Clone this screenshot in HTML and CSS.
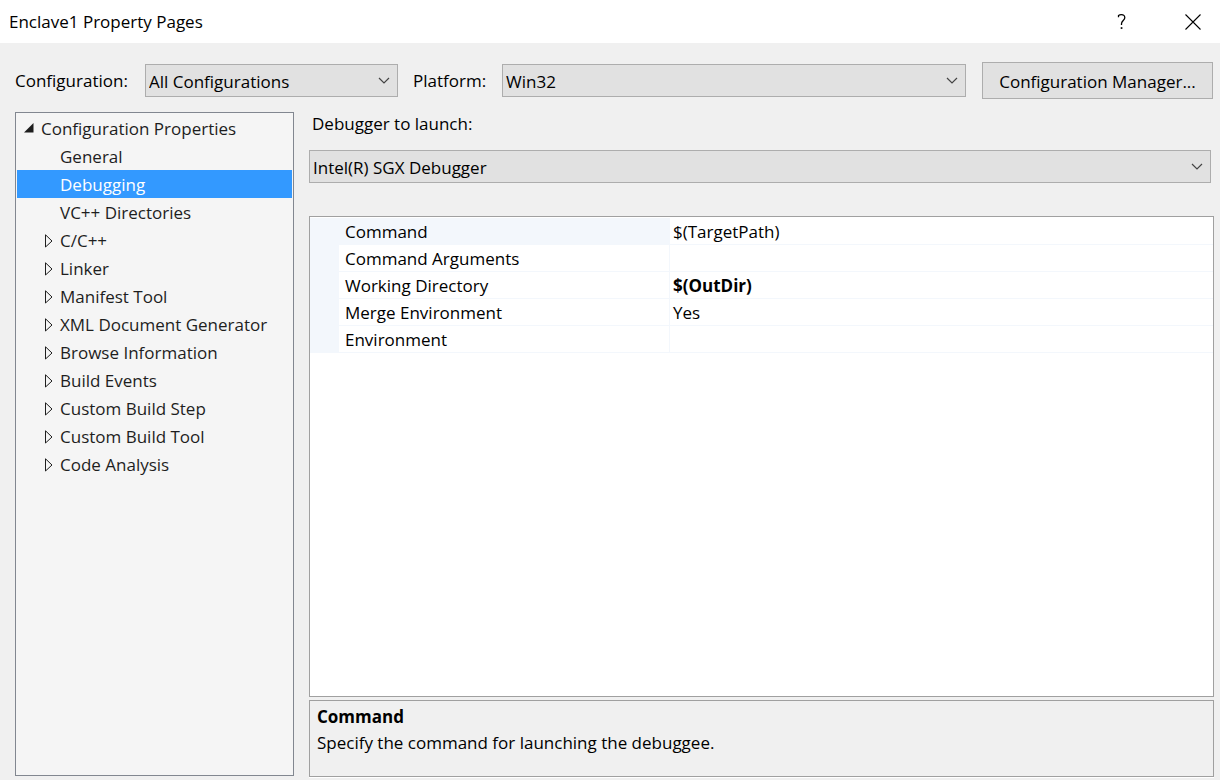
FILE: index.html
```html
<!DOCTYPE html>
<html lang="en">
<head>
<meta charset="utf-8">
<title>Enclave1 Property Pages</title>
<link rel="stylesheet" href="styles.css">
</head>
<body>
<svg class="defs" width="0" height="0" aria-hidden="true">
  <symbol id="chevron" viewBox="0 0 12 8"><path d="M1 1 6 6 11 1" fill="none" stroke="#444" stroke-width="1.2"/></symbol>
  <symbol id="closed" viewBox="0 0 8 14"><path d="M.5 .8V13L7 7Z" fill="none" stroke="#1e1e1e"/></symbol>
  <symbol id="open" viewBox="0 0 10 10"><path d="M9.500 0V9.500H0Z" fill="#1e1e1e"/></symbol>
</svg>
<header class="titlebar">
  <h1 class="title">Enclave1 Property Pages</h1>
  <button class="caption-button" type="button" aria-label="Help">
    <svg width="10" height="16" viewBox="0 0 10 16"><path d="M1.500 3.200V1.600Q2.700.700 4.300.700 7.800.700 7.800 3.700C7.800 6.400 4.500 6.700 4.500 9.800V11" fill="none" stroke="#000" stroke-width="1.300"/><path d="M3.700 13.200h1.700v1.700H3.700z"/></svg>
  </button>
  <button class="caption-button close" type="button" aria-label="Close">
    <svg width="16" height="16" viewBox="0 0 16 16"><path d="M.5.5 15.500 15.500M15.500.5.5 15.500" fill="none" stroke="#000" stroke-width="1.100"/></svg>
  </button>
</header>
<div class="toolbar">
  <label class="config-label" for="config">Configuration:</label>
  <div class="dropdown config">
    <select id="config"><option>All Configurations</option></select>
    <svg width="12" height="8" aria-hidden="true"><use href="#chevron"/></svg>
  </div>
  <label class="platform-label" for="platform">Platform:</label>
  <div class="dropdown platform">
    <select id="platform"><option>Win32</option></select>
    <svg width="12" height="8" aria-hidden="true"><use href="#chevron"/></svg>
  </div>
  <button class="manager" type="button">Configuration Manager...</button>
</div>
<div class="content">
  <nav class="tree" aria-label="Configuration Properties">
    <button class="node root" type="button" aria-expanded="true"><svg width="10" height="10"><use href="#open"/></svg>Configuration Properties</button>
    <button class="node leaf" type="button">General</button>
    <button class="node leaf selected" type="button" aria-current="page">Debugging</button>
    <button class="node leaf" type="button">VC++ Directories</button>
    <button class="node" type="button" aria-expanded="false"><svg width="8" height="14"><use href="#closed"/></svg>C/C++</button>
    <button class="node" type="button" aria-expanded="false"><svg width="8" height="14"><use href="#closed"/></svg>Linker</button>
    <button class="node" type="button" aria-expanded="false"><svg width="8" height="14"><use href="#closed"/></svg>Manifest Tool</button>
    <button class="node" type="button" aria-expanded="false"><svg width="8" height="14"><use href="#closed"/></svg>XML Document Generator</button>
    <button class="node" type="button" aria-expanded="false"><svg width="8" height="14"><use href="#closed"/></svg>Browse Information</button>
    <button class="node" type="button" aria-expanded="false"><svg width="8" height="14"><use href="#closed"/></svg>Build Events</button>
    <button class="node" type="button" aria-expanded="false"><svg width="8" height="14"><use href="#closed"/></svg>Custom Build Step</button>
    <button class="node" type="button" aria-expanded="false"><svg width="8" height="14"><use href="#closed"/></svg>Custom Build Tool</button>
    <button class="node" type="button" aria-expanded="false"><svg width="8" height="14"><use href="#closed"/></svg>Code Analysis</button>
  </nav>
  <main class="main">
    <label class="debugger-label" for="debugger">Debugger to launch:</label>
    <div class="dropdown debugger">
      <select id="debugger"><option>Intel(R) SGX Debugger</option></select>
      <svg width="12" height="8" aria-hidden="true"><use href="#chevron"/></svg>
    </div>
    <div class="grid">
      <table class="properties">
        <tr class="current"><td class="gutter"></td><th scope="row">Command</th><td>$(TargetPath)</td></tr>
        <tr><td class="gutter"></td><th scope="row">Command Arguments</th><td></td></tr>
        <tr><td class="gutter"></td><th scope="row">Working Directory</th><td class="changed">$(OutDir)</td></tr>
        <tr><td class="gutter"></td><th scope="row">Merge Environment</th><td>Yes</td></tr>
        <tr><td class="gutter"></td><th scope="row">Environment</th><td></td></tr>
      </table>
    </div>
    <section class="description">
      <h2>Command</h2>
      <p>Specify the command for launching the debuggee.</p>
    </section>
  </main>
</div>
</body>
</html>
```

FILE: styles.css
```css
* { box-sizing: border-box; }

body {
  display: flex;
  flex-direction: column;
  min-height: 100vh;
  margin: 0;
  background: #f0f0f0;
  color: #000;
  font: 17px/26px "Segoe UI", "Open Sans", "Noto Sans", sans-serif;
}

button, select { color: inherit; font: inherit; }
h1, h2, p { margin: 0; }
.defs { position: absolute; }

.titlebar {
  display: flex;
  align-items: center;
  height: 43px;
  padding-left: 9px;
  background: #fff;
}
.title { flex: 1; font-size: 17px; font-weight: 400; }
.caption-button {
  display: grid;
  place-items: center;
  width: 70px;
  height: 41px;
  padding: 0;
  border: 0;
  background: none;
}
.close { width: 63px; padding-left: 8px; }

.toolbar {
  display: flex;
  align-items: center;
  padding: 19px 7px 13px 15px;
}
.config-label { width: 130px; }
.platform-label { width: 89px; margin-left: 15px; }

.dropdown { display: grid; align-items: center; }
.dropdown select {
  grid-area: 1 / 1;
  width: 100%;
  height: 33px;
  padding: 2px 32px 0 3px;
  border: 1px solid #adadad;
  border-radius: 0;
  background: #e1e1e1;
  appearance: none;
}
.dropdown svg {
  grid-area: 1 / 1;
  justify-self: end;
  margin-right: 8px;
  pointer-events: none;
}
.config { width: 253px; }
.platform { flex: 1; }

.manager {
  width: 231px;
  height: 37px;
  margin-left: 16px;
  padding: 2px 0 0;
  border: 1px solid #adadad;
  background: #e1e1e1;
}

.content {
  display: flex;
  flex: 1;
  gap: 15px;
  padding: 0 6px 3px 15px;
}

.tree {
  display: flex;
  flex-direction: column;
  width: 279px;
  margin-bottom: 1px;
  padding: 1px;
  border: 1px solid #828790;
  background: #f5f5f5;
  color: #1e1e1e;
}
.node {
  display: flex;
  align-items: center;
  gap: 7px;
  height: 28px;
  padding: 2px 0 0 28px;
  border: 0;
  background: none;
  white-space: nowrap;
}
.root { padding-left: 7px; }
.root svg { margin-bottom: 2px; }
.leaf { padding-left: 43px; }
.selected { background: #3399ff; color: #fff; }

.main { display: flex; flex: 1; flex-direction: column; }
.debugger-label { padding-left: 3px; margin: -1px 0 13px; }
.debugger { margin: 0 3px 33px 0; }

.grid {
  flex: 1;
  padding-top: 1px;
  border: 1px solid #a0a0a0;
  background: #fff;
}
.properties { width: 100%; border-spacing: 0; table-layout: fixed; }
.properties th, .properties td {
  height: 27px;
  padding: 2px 3px 0;
  border-bottom: 1px solid #f3f7fc;
  line-height: 24px;
  text-align: left;
  font-weight: 400;
}
.properties th {
  width: 331px;
  padding-left: 6px;
  border-right: 1px solid #f3f7fc;
}
.properties .gutter { width: 29px; padding: 0; background: #f3f7fc; }
.properties .current th { background: #f3f7fc; }
.properties .changed { font-weight: 700; }

.description {
  min-height: 77px;
  margin-top: 3px;
  padding: 3px 7px;
  border: 1px solid #a0a0a0;
  box-shadow: 0 1px #fff;
}
.description h2 { font-size: 17px; font-weight: 700; }
```
